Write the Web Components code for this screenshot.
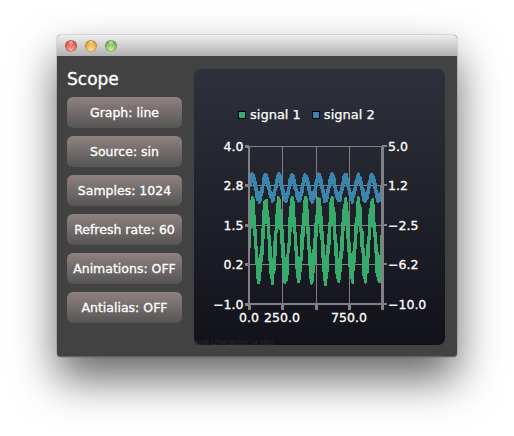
<!DOCTYPE html>
<html>
<head>
<meta charset="utf-8">
<title>Scope</title>
<style>
  html, body { margin: 0; background: #fff; }
  body { font-family: "DejaVu Sans", sans-serif; color: #fff; }
</style>
</head>
<body>
<scope-window>
  <scope-button>Graph: line</scope-button>
  <scope-button>Source: sin</scope-button>
  <scope-button>Samples: 1024</scope-button>
  <scope-button>Refresh rate: 60</scope-button>
  <scope-button>Animations: OFF</scope-button>
  <scope-button>Antialias: OFF</scope-button>
  <scope-chart slot="chart"></scope-chart>
</scope-window>

<script>
class ScopeButton extends HTMLElement {
  constructor() {
    super();
    this.attachShadow({mode: "open"});
    this.shadowRoot.innerHTML = `
      <style>
        :host {
          display: flex;
          align-items: center;
          justify-content: center;
          height: 31px;
          border-radius: 6px;
          background: linear-gradient(#8f8280, #555454);
          font-size: 12.5px;
          white-space: nowrap;
          -webkit-text-stroke: .3px #fff;
        }
      </style>
      <slot></slot>`;
  }
}

class ScopeWindow extends HTMLElement {
  constructor() {
    super();
    this.attachShadow({mode: "open"});
    this.shadowRoot.innerHTML = `
      <style>
        :host { display: block; padding: 35px 57px 79px; }
        .frame {
          width: 400px;
          height: 322px;
          border-radius: 4px;
          background: #424242;
          box-shadow: 0 22px 44px rgba(0,0,0,.6), 0 0 0 1px rgba(0,0,0,.1);
        }
        .bar {
          height: 21px;
          display: flex;
          align-items: center;
          gap: 8px;
          padding-left: 8px;
          border-radius: 4px 4px 0 0;
          background: linear-gradient(#eeeeee, #b2b2b2);
        }
        .dot { width: 12px; height: 12px; border-radius: 50%; box-shadow: inset 0 0 0 1px rgba(0,0,0,.22); }
        .red { background: radial-gradient(circle at 50% 18%, rgba(255,255,255,.55), transparent 30%), radial-gradient(circle at 50% 85%, #ffaca2, #dc4b46 72%); }
        .yellow { background: radial-gradient(circle at 50% 18%, rgba(255,255,255,.55), transparent 30%), radial-gradient(circle at 50% 85%, #ffe596, #de9c32 72%); }
        .green { background: radial-gradient(circle at 50% 18%, rgba(255,255,255,.55), transparent 30%), radial-gradient(circle at 50% 85%, #cdf0a0, #6eae4e 72%); }
        .main {
          display: flex;
          gap: 12px;
          padding: 13px 12px 12px 10px;
          box-sizing: border-box;
          height: 301px;
          border-bottom: 1px solid #646464;
          border-radius: 0 0 4px 4px;
        }
        .side { width: 115px; display: flex; flex-direction: column; gap: 8px; margin-top: -1px; }
        h1 {
          margin: 0 0 -1px;
          height: 22px;
          line-height: 22px;
          font-size: 17px;
          font-weight: normal;
          -webkit-text-stroke: .35px #fff;
        }
      </style>
      <div class="frame">
        <div class="bar">
          <span class="dot red"></span><span class="dot yellow"></span><span class="dot green"></span>
        </div>
        <div class="main">
          <div class="side">
            <h1>Scope</h1>
            <slot></slot>
          </div>
          <slot name="chart"></slot>
        </div>
      </div>`;
  }
}

class ScopeChart extends HTMLElement {
  constructor() {
    super();
    this.attachShadow({mode: "open"});
    this.shadowRoot.innerHTML = `
      <style>
        :host {
          display: flex;
          flex-direction: column;
          width: 251px;
          height: 276px;
          box-sizing: border-box;
          padding-top: 37px;
          border-radius: 7px;
          background: linear-gradient(#2e303b, #11121a);
          font-size: 13px;
          -webkit-text-stroke: .25px #fff;
        }
        .legend { display: flex; align-items: center; height: 17px; padding-left: 44px; }
        .box { width: 6px; height: 6px; border: 1px solid #000; margin-right: 4px; }
        .s1 { background: #36ab6b; }
        .s2 { background: #3b84ab; margin-left: 11px; }
        svg { display: block; overflow: visible; }
        text {
          fill: #fff;
          stroke: #fff;
          stroke-width: .3px;
          font-family: "DejaVu Sans", sans-serif;
          font-size: 12.5px;
        }
        text.build {
          fill: #2c2c2c;
          stroke: none;
          font-family: "Liberation Sans", sans-serif;
          font-size: 6.5px;
          -webkit-text-stroke: 0;
        }
      </style>
      <div class="legend">
        <span class="box s1"></span><span>signal 1</span>
        <span class="box s2"></span><span>signal 2</span>
      </div>
      <svg width="251" height="222" viewBox="194 123 251 222"></svg>`;
    this.draw();
  }

  draw() {
    const svg = this.shadowRoot.querySelector("svg");
    const left = 249, right = 382, top = 146, bottom = 304;
    let out = "";
    const line = (x1, y1, x2, y2, w) => {
      out += `<line x1="${x1}" y1="${y1}" x2="${x2}" y2="${y2}" stroke="#808085" stroke-width="${w}" shape-rendering="crispEdges"/>`;
    };
    const label = (x, y, s, anchor) => {
      out += `<text x="${x}" y="${y}" text-anchor="${anchor}">${s}</text>`;
    };

    const xs = [249, 282, 316, 349, 382];
    const ys = [146, 185, 225, 264, 304];
    xs.slice(1, 4).forEach(x => line(x, top, x, bottom, 1));
    ys.slice(0, 4).forEach(y => line(left, y, right, y, 1));

    let seed = 12345;
    const rnd = () => (seed = (seed * 16807) % 2147483647) / 2147483647;
    const trace = (scale, color) => {
      let pts = "";
      for (let j = 0; j < 1024; j++) {
        const v = Math.sin(Math.PI / 50 * j) + 0.5 + 0.08 + rnd() * 0.84;
        const x = left + j * (right - left) / 1000;
        if (x > right) break;
        pts += x.toFixed(2) + "," + scale(v).toFixed(2) + " ";
      }
      out += `<polyline points="${pts}" fill="none" stroke="${color}" stroke-width="2.8" stroke-linejoin="round" shape-rendering="crispEdges"/>`;
    };
    trace(v => top + (4 - v) * 31.5, "#36ab6b");
    trace(v => top + (5 - v) * 10.5, "#3b84ab");

    line(left, top, left, bottom + 1, 2);
    line(right, top, right, bottom + 1, 3);
    line(left, bottom, right, bottom, 2);
    xs.forEach(x => line(x, bottom, x, bottom + 6, 3));
    ys.forEach(y => { line(left - 4, y, left, y, 3); line(right, y, right + 5, y, 2); });

    const leftLabels = ["4.0", "2.8", "1.5", "0.2", "\u22121.0"];
    const rightLabels = ["5.0", "1.2", "\u22122.5", "\u22126.2", "\u221210.0"];
    ys.forEach((y, i) => {
      label(243.5, y + 5, leftLabels[i], "end");
      label(388, y + 5, rightLabels[i], "start");
    });
    label(249, 322, "0.0", "middle");
    label(282, 322, "250.0", "middle");
    label(349, 322, "750.0", "middle");
    out += `<text class="build" x="194" y="345">Build 12:04:36 Dec 14 2012</text>`;
    svg.innerHTML = out;
  }
}

customElements.define("scope-button", ScopeButton);
customElements.define("scope-window", ScopeWindow);
customElements.define("scope-chart", ScopeChart);
</script>
</body>
</html>
